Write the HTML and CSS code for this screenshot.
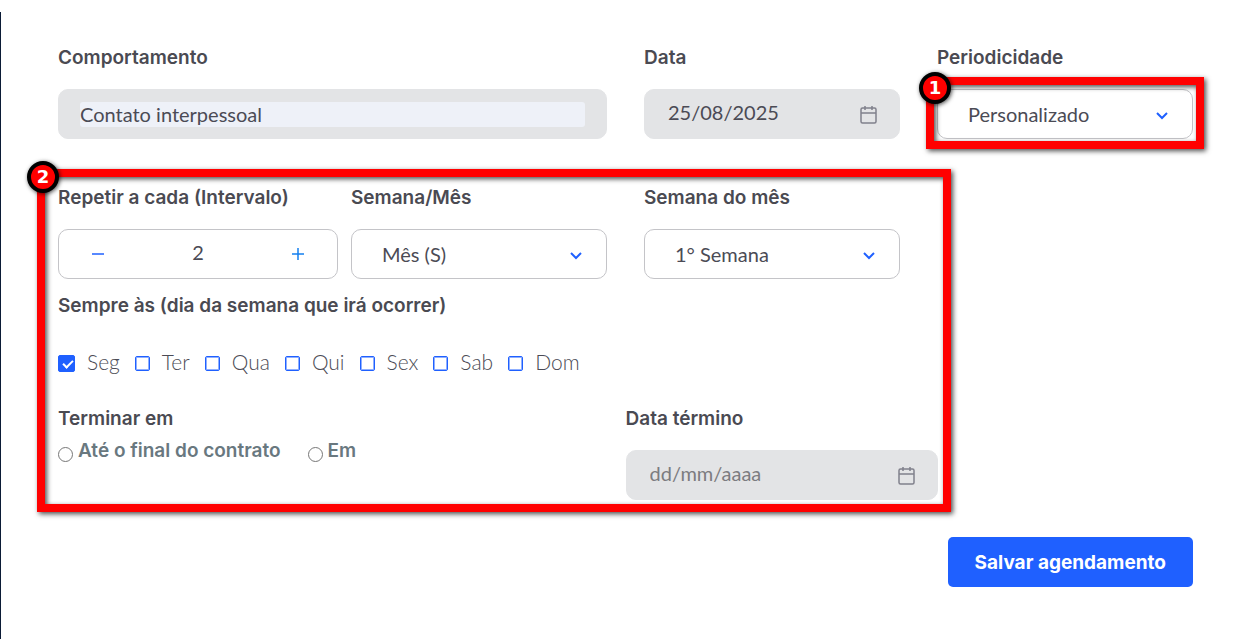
FILE: index.html
```html
<!DOCTYPE html>
<html lang="pt-BR">
<head>
  <meta charset="UTF-8">
  <meta name="viewport" content="width=device-width, initial-scale=1">
  <title>Agendamento</title>
  <link rel="stylesheet" href="styles.css">
</head>
<body>
  <form class="schedule">

    <div class="row">
      <div class="field field-wide">
        <label for="comportamento">Comportamento</label>
        <div class="control disabled behavior">
          <input type="text" id="comportamento" value="Contato interpessoal" readonly>
        </div>
      </div>

      <div class="field">
        <label for="data">Data</label>
        <div class="control disabled date">
          <input type="text" id="data" value="25/08/2025" readonly>
          <svg class="calendar" viewBox="0 0 17 19" aria-hidden="true">
            <rect x="1" y="3" width="15" height="15" rx="1.5"/>
            <path d="M1 8h15M5 1v4M12 1v4"/>
          </svg>
        </div>
      </div>

      <div class="field">
        <label for="periodicidade">Periodicidade</label>
        <div class="control select">
          <select id="periodicidade">
            <option>Personalizado</option>
          </select>
          <svg class="chevron" viewBox="0 0 12 8" aria-hidden="true"><path d="M1 1l5 5 5-5"/></svg>
          <div class="highlight highlight-period"><span class="step">1</span></div>
        </div>
      </div>
    </div>

    <div class="recurrence">
      <div class="row">
        <div class="field">
          <label for="intervalo">Repetir a cada (Intervalo)</label>
          <div class="control stepper">
            <button type="button" aria-label="Diminuir">
              <svg viewBox="0 0 12 12"><path d="M0 6h12"/></svg>
            </button>
            <input type="text" id="intervalo" value="2">
            <button type="button" aria-label="Aumentar" class="plus">
              <svg viewBox="0 0 12 12"><path d="M0 6h12M6 0v12"/></svg>
            </button>
          </div>
        </div>

        <div class="field">
          <label for="unidade">Semana/Mês</label>
          <div class="control select">
            <select id="unidade">
              <option>Mês (S)</option>
            </select>
            <svg class="chevron" viewBox="0 0 12 8" aria-hidden="true"><path d="M1 1l5 5 5-5"/></svg>
          </div>
        </div>

        <div class="field">
          <label for="semana">Semana do mês</label>
          <div class="control select">
            <select id="semana">
              <option>1° Semana</option>
            </select>
            <svg class="chevron" viewBox="0 0 12 8" aria-hidden="true"><path d="M1 1l5 5 5-5"/></svg>
          </div>
        </div>
      </div>

      <fieldset class="weekdays">
        <legend>Sempre às (dia da semana que irá ocorrer)</legend>
        <div class="days">
          <label><input type="checkbox" checked> <span>Seg</span></label>
          <label><input type="checkbox"> <span>Ter</span></label>
          <label><input type="checkbox"> <span>Qua</span></label>
          <label><input type="checkbox"> <span>Qui</span></label>
          <label><input type="checkbox"> <span>Sex</span></label>
          <label><input type="checkbox"> <span>Sab</span></label>
          <label><input type="checkbox"> <span>Dom</span></label>
        </div>
      </fieldset>

      <div class="ending">
        <fieldset>
          <legend>Terminar em</legend>
          <div class="end-options">
            <label><input type="radio" name="fim"> Até o final do contrato</label>
            <label><input type="radio" name="fim"> Em</label>
          </div>
        </fieldset>

        <div class="field end-date">
          <label for="termino">Data término</label>
          <div class="control disabled date">
            <input type="text" id="termino" placeholder="dd/mm/aaaa" readonly>
            <svg class="calendar" viewBox="0 0 17 19" aria-hidden="true">
              <rect x="1" y="3" width="15" height="15" rx="1.5"/>
              <path d="M1 8h15M5 1v4M12 1v4"/>
            </svg>
          </div>
        </div>
      </div>

      <div class="highlight highlight-recurrence"><span class="step">2</span></div>
    </div>

    <div class="actions">
      <button type="submit" class="save">Salvar agendamento</button>
    </div>
  </form>
</body>
</html>
```
FILE: styles.css
```css
* {
  box-sizing: border-box;
}

body {
  margin: 12px 0 0;
  background-color: #fff;
  color: #4b4b55;
  font-family: Lato, sans-serif;
  font-size: 20px;
}

.schedule {
  min-height: calc(100vh - 12px);
  padding: 32px 56px 40px 57px;
  border-left: 1px solid #0b1b36;
}

.row {
  display: grid;
  grid-template-columns: repeat(4, minmax(0, 1fr));
  column-gap: 37px;
}

.field-wide {
  grid-column: span 2;
}

.field > label,
legend {
  display: block;
  padding: 0;
  color: #4a4a52;
  font-family: Inter, sans-serif;
  font-size: 19px;
  font-weight: 600;
  line-height: 27px;
  white-space: nowrap;
}

.field > label {
  margin-bottom: 18px;
}

fieldset {
  min-width: 0;
  margin: 0;
  padding: 0;
  border: 0;
}

input,
select,
button {
  font: inherit;
  color: inherit;
}

/* Controls */
.control {
  position: relative;
  display: flex;
  align-items: center;
  height: 50px;
  border: 1px solid #c4c4c8;
  border-radius: 10px;
  background-color: #fff;
}

.control input,
.control select {
  width: 100%;
  min-width: 0;
  padding: 0;
  border: 0;
  background: none;
  outline: none;
}

.control.disabled {
  border-color: #e3e4e6;
  background-color: #e3e4e6;
}

.behavior {
  padding: 0 21px;
}

.control.behavior input {
  height: 25px;
  border-radius: 3px;
  background-color: #eef1f8;
}

.date {
  padding: 0 22px 0 23px;
}

.control.date input,
.control.stepper input {
  padding-bottom: 4px;
}

.date input::placeholder {
  color: #7c7c80;
  opacity: 1;
}

.calendar {
  flex: none;
  width: 17px;
  height: 19px;
  fill: none;
  stroke: #80808c;
  stroke-width: 1.5;
}

.control.select select {
  height: 100%;
  padding: 0 50px 0 30px;
  appearance: none;
}

.chevron {
  position: absolute;
  right: 24px;
  top: 22px;
  width: 12px;
  height: 8px;
  fill: none;
  stroke: #1f60ff;
  stroke-width: 2;
  pointer-events: none;
}

/* Wider than its column, runs into the gap */
.stepper {
  width: 280px;
}

.stepper button {
  display: flex;
  flex: none;
  justify-content: center;
  align-items: center;
  width: 78px;
  height: 100%;
  padding: 0;
  border: 0;
  background: none;
}

.stepper svg {
  width: 12px;
  height: 12px;
  stroke: #1f60ff;
  stroke-width: 1.5;
}

.stepper .plus svg {
  stroke: #1480f0;
}

.stepper input {
  text-align: center;
}

/* Recurrence */
.recurrence {
  position: relative;
  margin-top: 45px;
}

.weekdays {
  margin-top: 13px;
}

.days {
  display: flex;
  gap: 15px;
  margin-top: 30px;
  font-size: 21px;
  font-weight: 300;
  line-height: 28px;
}

.days label {
  display: flex;
  align-items: center;
  gap: 12px;
  height: 28px;
}

.days span {
  padding-bottom: 3px;
}

.days input {
  width: 15px;
  height: 15px;
  margin: 0;
  appearance: none;
  border: 1px solid #1f60ff;
  border-radius: 2px;
  box-shadow: inset 0 0 0 1px rgba(31, 96, 255, 0.5);
}

.days input:checked {
  position: relative;
  width: 17px;
  height: 17px;
  background-color: #1f60ff;
}

.days input:checked::after {
  content: "";
  position: absolute;
  left: 4px;
  top: 4px;
  width: 8px;
  height: 4px;
  border: solid #fff;
  border-width: 0 0 2px 2px;
  transform: rotate(-45deg);
}

.ending {
  display: grid;
  grid-template-columns: 1fr 1fr;
  margin-top: 28px;
}

.end-options {
  display: flex;
  gap: 27px;
  margin-top: 5px;
  color: #69787f;
  font-family: Inter, sans-serif;
  font-size: 19px;
  font-weight: 600;
  line-height: 27px;
}

.end-options label {
  display: flex;
  align-items: flex-end;
  gap: 5px;
}

.end-options input {
  width: 15px;
  height: 15px;
  margin: 0 0 2px;
}

.end-date {
  width: 55%;
}

/* Numbered callouts */
.highlight {
  position: absolute;
  border: 8px solid #f00;
  box-shadow: 2px 2px 5px rgba(0, 0, 0, 0.7), inset 2px 2px 5px rgba(0, 0, 0, 0.7);
  pointer-events: none;
}

.highlight-period {
  inset: -13px -12px -11px -12px;
}

.highlight-recurrence {
  inset: -15px 242px -12px -21px;
}

.step {
  position: absolute;
  left: -18px;
  top: -16px;
  width: 32px;
  height: 32px;
  border: 4px solid #000;
  border-radius: 50%;
  background-color: #f00;
  box-shadow: 1px 1px 4px rgba(0, 0, 0, 0.7);
  color: #fff;
  font-family: "DejaVu Sans", sans-serif;
  font-size: 18px;
  font-weight: 700;
  line-height: 24px;
  text-align: center;
}

.highlight-period .step {
  left: -15px;
  top: -13px;
}

.actions {
  display: flex;
  justify-content: flex-end;
  margin-top: 37px;
}

.save {
  height: 50px;
  padding: 0 27px;
  border: 0;
  border-radius: 5px;
  background-color: #1f60ff;
  color: #fff;
  font-family: Inter, sans-serif;
  font-size: 19px;
  font-weight: 700;
  cursor: pointer;
}
```
